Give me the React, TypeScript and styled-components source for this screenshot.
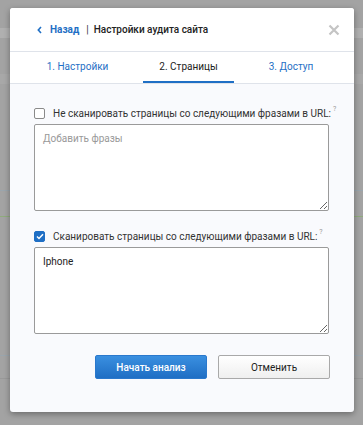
import React, { useState } from 'react';
import styled, { createGlobalStyle } from 'styled-components';

const GlobalStyle = createGlobalStyle`
  html, body {
    margin: 0;
    padding: 0;
  }
  body {
    font-family: Roboto, "Liberation Sans", Arial, sans-serif;
    background: #a3a3a3;
  }
`;

const Backdrop = styled.div`
  width: 363px;
  height: 425px;
  box-sizing: border-box;
  padding: 8px 9px 0 10px;
  overflow: hidden;
  background:
    linear-gradient(#a3a3a3, #a3a3a3) 0 0 / 100% 28px no-repeat,
    linear-gradient(#b0b0b0, #b0b0b0) 0 28px / 100% 10px no-repeat,
    linear-gradient(#a8a8a8, #a8a8a8) 0 74px / 100% 10px no-repeat,
    linear-gradient(#9aa5ad, #9aa5ad) 0 190px / 100% 1px no-repeat,
    linear-gradient(#8fab7d, #8fab7d) 0 216px / 100% 1px no-repeat,
    linear-gradient(#9aa5ad, #9aa5ad) 0 355px / 100% 1px no-repeat,
    linear-gradient(#999999, #999999) 0 378px / 100% 1px no-repeat,
    #a3a3a3;
`;

const Modal = styled.div`
  width: 344px;
  height: 404px;
  background: #f9fafd;
  border-radius: 3px;
  box-shadow: 0 2px 6px rgba(0, 0, 0, 0.35);
  display: flex;
  flex-direction: column;
  overflow: hidden;
`;

const Header = styled.div`
  height: 43px;
  display: flex;
  align-items: center;
  padding: 0 14px 0 27px;
  background: #fff;
  border-bottom: 1px solid #dfe3ea;
  font-size: 10px;
`;

const BackLink = styled.a`
  display: flex;
  align-items: center;
  gap: 8px;
  color: #1f6fc5;
  font-weight: 700;
  text-decoration: none;
  cursor: pointer;
`;

const Divider = styled.span`
  margin: 0 5px 0 7px;
  color: #333;
`;

const Title = styled.span`
  color: #222;
  font-weight: 500;
  flex: 1;
`;

const CloseButton = styled.button`
  border: none;
  background: none;
  padding: 0;
  width: 12px;
  height: 12px;
  display: flex;
  cursor: pointer;
`;

const Tabs = styled.div`
  height: 31px;
  display: flex;
  justify-content: center;
  gap: 19px;
  padding-right: 4px;
  background: #fff;
  border-bottom: 1px solid #dfe3ea;
`;

const Tab = styled.div<{ $active?: boolean }>`
  display: flex;
  align-items: center;
  padding: 0 16px;
  font-size: 10px;
  color: ${(p) => (p.$active ? '#222' : '#1f6fc5')};
  border-bottom: 2px solid ${(p) => (p.$active ? '#1f6fc5' : 'transparent')};
  cursor: pointer;
`;

const Body = styled.div`
  flex: 1;
  padding: 22px 24px 0 24px;
  display: flex;
  flex-direction: column;
`;

const CheckRow = styled.label`
  display: flex;
  align-items: center;
  gap: 8px;
  height: 14px;
  margin-bottom: 4px;
  font-size: 10px;
  color: #333;
  white-space: nowrap;
  cursor: pointer;
`;

const Box = styled.span<{ $checked?: boolean }>`
  flex: 0 0 11px;
  width: 11px;
  height: 11px;
  box-sizing: border-box;
  border-radius: 2px;
  border: 1px solid ${(p) => (p.$checked ? '#1f6fc5' : '#8a8a8a')};
  background: ${(p) => (p.$checked ? '#1f6fc5' : '#fff')};
  display: flex;
  align-items: center;
  justify-content: center;
`;

const Hint = styled.sup`
  color: #999;
  font-size: 7px;
  margin-left: 2px;
  position: relative;
  top: -2px;
`;

const Area = styled.textarea`
  width: 295px;
  height: 87px;
  box-sizing: border-box;
  border: 1px solid #9a9a9a;
  border-radius: 2px;
  padding: 8px;
  font-family: Roboto, "Liberation Sans", Arial, sans-serif;
  font-size: 10px;
  color: #222;
  background: #fff;
  resize: vertical;
  margin-bottom: 18px;
  outline: none;
  &::placeholder {
    color: #999;
  }
`;

const Actions = styled.div`
  display: flex;
  justify-content: flex-end;
  gap: 11px;
  margin-top: 3px;
`;

const Button = styled.button<{ $primary?: boolean }>`
  width: 112px;
  height: 24px;
  border-radius: 2px;
  font-family: Roboto, "Liberation Sans", Arial, sans-serif;
  font-size: 10px;
  cursor: pointer;
  color: ${(p) => (p.$primary ? '#fff' : '#222')};
  font-weight: ${(p) => (p.$primary ? 500 : 400)};
  border: 1px solid ${(p) => (p.$primary ? '#2a78cc' : '#a9a9a9')};
  background: ${(p) =>
    p.$primary
      ? 'linear-gradient(#3a8fe0, #1f6ec4)'
      : 'linear-gradient(#ffffff, #efefef)'};
`;

const Check = () => (
  <svg width="8" height="7" viewBox="0 0 8 7">
    <path d="M1 3.5 L3 5.5 L7 1.2" stroke="#fff" strokeWidth="1.5" fill="none" />
  </svg>
);

const App: React.FC = () => {
  const [skip, setSkip] = useState(false);
  const [scan, setScan] = useState(true);
  const [skipText, setSkipText] = useState('');
  const [scanText, setScanText] = useState('Iphone');

  return (
    <>
      <GlobalStyle />
      <Backdrop>
        <Modal>
          <Header>
            <BackLink>
              <svg width="5" height="8" viewBox="0 0 5 8">
                <path d="M4 1 L1.3 4 L4 7" stroke="#1f6fc5" strokeWidth="1.6" fill="none" />
              </svg>
              Назад
            </BackLink>
            <Divider>|</Divider>
            <Title>Настройки аудита сайта</Title>
            <CloseButton>
              <svg width="12" height="12" viewBox="0 0 12 12">
                <path d="M1.5 1.5 L10.5 10.5 M10.5 1.5 L1.5 10.5" stroke="#c4c4c4" strokeWidth="2.2" />
              </svg>
            </CloseButton>
          </Header>
          <Tabs>
            <Tab>1. Настройки</Tab>
            <Tab $active>2. Страницы</Tab>
            <Tab>3. Доступ</Tab>
          </Tabs>
          <Body>
            <CheckRow onClick={() => setSkip(!skip)}>
              <Box $checked={skip}>{skip && <Check />}</Box>
              <span>
                Не сканировать страницы со следующими фразами в URL:<Hint>?</Hint>
              </span>
            </CheckRow>
            <Area
              placeholder="Добавить фразы"
              value={skipText}
              onChange={(e) => setSkipText(e.target.value)}
            />
            <CheckRow onClick={() => setScan(!scan)}>
              <Box $checked={scan}>{scan && <Check />}</Box>
              <span>
                Сканировать страницы со следующими фразами в URL:<Hint>?</Hint>
              </span>
            </CheckRow>
            <Area value={scanText} onChange={(e) => setScanText(e.target.value)} />
            <Actions>
              <Button $primary>Начать анализ</Button>
              <Button>Отменить</Button>
            </Actions>
          </Body>
        </Modal>
      </Backdrop>
    </>
  );
};

export default App;
